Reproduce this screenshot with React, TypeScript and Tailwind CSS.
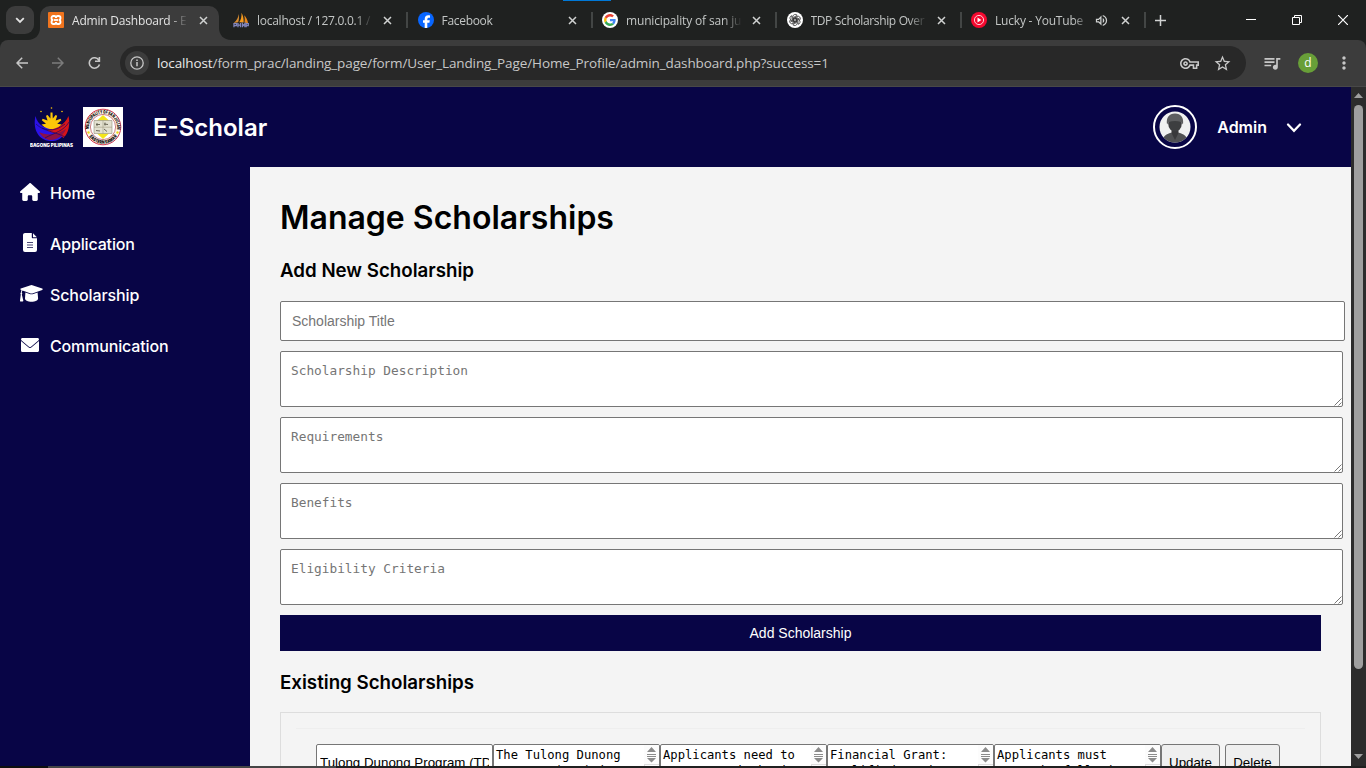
import type { ReactNode } from "react";
import { FaHouse } from "react-icons/fa6";
import { MdOutlineVpnKey, MdStarBorder, MdQueueMusic, MdMoreVert, MdOutlineVolumeUp } from "react-icons/md";

function XamppIcon() {
  return (
    <svg width="16" height="16" viewBox="0 0 16 16">
      <rect width="16" height="16" rx="1" fill="#f0741e" />
      <path d="M5.300 4h1c1.200 0 1.700 1 1.700 2 0-1 .5-2 1.700-2h1c1.100 0 1.800.8 1.800 1.900S11.800 8 10.700 8c1.100 0 1.800 1 1.800 2.100S11.800 12 10.700 12h-1C8.500 12 8 11 8 10c0 1-.5 2-1.700 2h-1c-1.100 0-1.800-.8-1.800-1.900S4.200 8 5.300 8C4.200 8 3.500 7 3.500 5.900S4.200 4 5.300 4z" fill="none" stroke="#fff" strokeWidth="1.800" />
      <path d="M6 8h4" stroke="#fff" strokeWidth="1.800" />
    </svg>
  );
}

function SailsIcon() {
  return (
    <svg width="17" height="16" viewBox="0 0 17 16">
      <path d="M6 1.500C5.800 5 4 8.500.8 11.200l4.700-.8C6.500 7.500 6.600 4 6 1.500z" fill="#d98d30" />
      <path d="M9 .2c.3 4-.4 7.300-2.400 10.300l4.700.2C11.500 7 10.900 3 9 .2z" fill="#f89c1c" />
      <path d="M11.800 3c.8 2.600.9 5 .3 7.600l3.900.8C15.500 8 14 5 11.800 3z" fill="#e8871b" />
      <path d="M1 15.800v-4h2.800v2.200H1M5.300 11.200v4.600M5.300 13.500h2.500M8 11.200v4.600M10 15.800v-4l1.300 2 1.300-2v4M14 15.800v-4h2.300v2.200H14" stroke="#8186bd" strokeWidth="1.300" fill="none" />
    </svg>
  );
}

function FacebookIcon() {
  return (
    <svg width="16" height="16" viewBox="0 0 16 16">
      <circle cx="8" cy="8" r="8" fill="#0866ff" />
      <path d="M6.700 16v-5.300H5V8.300h1.700V7.200c0-2.700 1.200-3.900 3.700-3.900.5 0 1.300.1 1.600.2v2.200h-.9c-1.300 0-1.800.5-1.800 1.700v.9h2.500l-.4 2.400H9.300V16z" fill="#fff" />
    </svg>
  );
}

function GoogleIcon() {
  return (
    <svg width="16" height="16" viewBox="0 0 48 48">
      <circle cx="24" cy="24" r="24" fill="#fff" />
      <g transform="translate(6.200 6.200) scale(.74)">
        <path fill="#EA4335" d="M24 9.500c3.540 0 6.710 1.220 9.210 3.600l6.850-6.850C35.900 2.380 30.470 0 24 0 14.620 0 6.510 5.380 2.560 13.220l7.980 6.190C12.430 13.720 17.740 9.500 24 9.500z" />
        <path fill="#4285F4" d="M46.980 24.550c0-1.570-.15-3.090-.38-4.550H24v9.020h12.940c-.58 2.960-2.260 5.480-4.780 7.180l7.730 6c4.510-4.180 7.090-10.360 7.090-17.650z" />
        <path fill="#FBBC05" d="M10.530 28.590A14.500 14.500 0 0 1 9.770 24c0-1.600.27-3.140.76-4.590l-7.980-6.190A23.990 23.990 0 0 0 0 24c0 3.880.92 7.540 2.560 10.780z" />
        <path fill="#34A853" d="M24 48c6.480 0 11.930-2.130 15.890-5.810l-7.730-6c-2.150 1.450-4.920 2.300-8.160 2.300-6.260 0-11.570-4.220-13.470-9.910l-7.980 6.190C6.510 42.620 14.620 48 24 48z" />
      </g>
    </svg>
  );
}

function KnotIcon() {
  return (
    <svg width="16" height="16" viewBox="0 0 16 16">
      <circle cx="8" cy="8" r="8" fill="#fff" />
      <g fill="none" stroke="#222" strokeWidth=".7">
        {[0, 60, 120, 180, 240, 300].map((a) => (
          <path key={a} transform={`rotate(${a} 8 8)`} d="M5.900 9.200V4.600a2.400 2.400 0 0 1 4.300-1.300L6.800 5.300v4.200" />
        ))}
      </g>
    </svg>
  );
}

function MusicIcon() {
  return (
    <svg width="16" height="16" viewBox="0 0 16 16">
      <circle cx="8" cy="8" r="8" fill="#f5092f" />
      <circle cx="8" cy="8" r="4.600" fill="none" stroke="#fff" strokeWidth=".8" />
      <path d="M6.500 5.600v4.800L10.400 8z" fill="#fff" />
    </svg>
  );
}

function Close() {
  return (
    <svg width="9" height="9" viewBox="0 0 9 9" className="shrink-0">
      <path d="M1 1l7 7M8 1L1 8" stroke="#d0d2d1" strokeWidth="1.500" />
    </svg>
  );
}

type TabProps = { icon: ReactNode; title: string; active?: boolean; sound?: boolean; separator?: boolean; tracking?: string };

function Tab({ icon, title, active, sound, separator, tracking }: TabProps) {
  return (
    <div className="relative flex h-full w-[184.500px] shrink-0 items-center">
      <div className={`relative flex h-full w-[179px] shrink-0 items-center pr-[11.500px] ${active ? "rounded-t-[10px] bg-[#3c3c3c] pl-2 text-[#e3e3e3]" : "pl-[8.500px] text-[#c3c6c5]"}`}>
        <span className="flex w-4 shrink-0 -translate-y-[3px]">{icon}</span>
        <div
          className={`ml-2 -translate-y-[2.500px] text-[12px] whitespace-nowrap ${tracking ?? ""} ${sound ? "w-[94px]" : "w-[116px]"} [mask-image:linear-gradient(to_right,black_84%,transparent)]`}
        >
          {title}
        </div>
        {sound && <MdOutlineVolumeUp className="ml-[5px] shrink-0 -translate-y-[3px] text-[#d0d2d1]" size={15} />}
        <span className="ml-auto -translate-y-[3px]">
          <Close />
        </span>
        {active && (
          <>
            <svg className="absolute bottom-0 -left-3" width="12" height="12" viewBox="0 0 12 12">
              <path d="M12 0v12H0C7 12 12 7 12 0z" fill="#3c3c3c" />
            </svg>
            <svg className="absolute -right-3 bottom-0" width="12" height="12" viewBox="0 0 12 12">
              <path d="M0 0v12h12C5 12 0 7 0 0z" fill="#3c3c3c" />
            </svg>
          </>
        )}
      </div>
      {separator && <div className="ml-[2.500px] h-4 w-0.5 -translate-y-[3px] bg-[#434645]" />}
    </div>
  );
}

function Browser() {
  return (
    <div className="h-[87px] shrink-0 bg-[#1f2120] font-['Open_Sans','Noto_Sans',sans-serif]">
      <div className="relative flex h-10 pt-1.5">
        <div className="absolute top-0 left-[563px] h-px w-12 bg-[#0078d7]" />
        <div className="mr-1.5 ml-1.5 flex size-7 shrink-0 items-center justify-center rounded-[9px] bg-[#3c3c3c]">
          <svg width="10" height="7" viewBox="0 0 10 7" fill="none">
            <path d="M1.200 1.200L5 5l3.800-3.800" stroke="#e3e3e3" strokeWidth="1.800" />
          </svg>
        </div>
        <Tab icon={<XamppIcon />} title="Admin Dashboard - E" active tracking="tracking-[-0.200px]" />
        <Tab icon={<SailsIcon />} title="localhost / 127.0.0.1 /" separator tracking="tracking-[-0.260px]" />
        <Tab icon={<FacebookIcon />} title="Facebook" separator tracking="tracking-[-0.300px]" />
        <Tab icon={<GoogleIcon />} title="municipality of san ju" separator tracking="tracking-[-0.160px]" />
        <Tab icon={<KnotIcon />} title="TDP Scholarship Over" separator tracking="tracking-[-0.350px]" />
        <Tab icon={<MusicIcon />} title="Lucky - YouTube |" sound separator tracking="tracking-[-0.200px]" />
        <svg className="mt-[8.500px] ml-2 shrink-0" width="11" height="11" viewBox="0 0 11 11">
          <path d="M5.500 0v11M0 5.500h11" stroke="#d0d2d1" strokeWidth="1.500" />
        </svg>
        <div className="mr-[18px] ml-auto flex h-7 items-center gap-[36px] text-white">
          <svg width="10" height="10" viewBox="0 0 10 10"><path d="M0 4.500h10" stroke="currentColor" /></svg>
          <svg width="10" height="10" viewBox="0 0 10 10" fill="none" stroke="currentColor"><path d="M.5 2.500h7v7h-7zM2.500 2.500v-2h7v7h-2" /></svg>
          <svg width="10" height="10" viewBox="0 0 10 10"><path d="M0 0l10 10M10 0L0 10" stroke="currentColor" strokeWidth="1.200" /></svg>
        </div>
      </div>
      <div className="flex h-[47px] items-center rounded-t-lg border-b border-[#484848] bg-[#3c3c3c]">
        <div className="flex h-full w-[120px] shrink-0 items-center pl-4">
          <svg width="12" height="12" viewBox="0 0 12 12" fill="none" stroke="#c7c7c7" strokeWidth="1.500"><path d="M12 6H1M6.200.7L1 6l5.200 5.300" /></svg>
          <svg className="ml-6" width="12" height="12" viewBox="0 0 12 12" fill="none" stroke="#7c7c7c" strokeWidth="1.500"><path d="M0 6h11M5.800.7L11 6l-5.200 5.300" /></svg>
          <svg className="ml-6" width="13" height="12" viewBox="0 0 13 12" fill="none" stroke="#c7c7c7" strokeWidth="1.600"><path d="M10.800 3A5.200 5.200 0 1 0 11.500 7.500M11.400 0v4.300H7" /></svg>
        </div>
        <div className="flex h-[34px] w-[1126px] shrink-0 items-center rounded-full bg-[#282828] pl-[5px]">
          <div className="flex size-6 items-center justify-center rounded-full bg-[#3c3c3c]">
            <svg width="14" height="14" viewBox="0 0 14 14" fill="none" stroke="#c7c7c7" strokeWidth="1.300"><circle cx="7" cy="7" r="6.200" /><path d="M7 6v4.200M7 3.600v1.400" strokeWidth="1.500" /></svg>
          </div>
          <span className="ml-2 text-[13.500px] tracking-[-0.110px] whitespace-nowrap text-[#c7c7c7]">
            <span className="text-[#e8e8e8]">localhost</span>/form_prac/landing_page/form/User_Landing_Page/Home_Profile/admin_dashboard.php?success=1
          </span>
          <div className="mr-[14.500px] ml-auto flex items-center gap-[13.500px] text-[#c7c7c7]">
            <MdOutlineVpnKey size={19} />
            <MdStarBorder size={19} />
          </div>
        </div>
        <MdQueueMusic size={20} className="ml-4 text-[#c7c7c7]" />
        <div className="ml-4 flex size-5 items-center justify-center rounded-full bg-[#689f38] text-[12px] leading-none text-white">d</div>
        <MdMoreVert size={20} className="ml-4 text-[#c7c7c7]" />
      </div>
    </div>
  );
}

function BagongLogo() {
  return (
    <svg width="44" height="42" viewBox="0 0 44 42">
      <g fill="#fbc608">
        <circle cx="21.500" cy="2" r=".8" /><circle cx="11" cy="5.500" r=".8" /><circle cx="32" cy="5.500" r=".8" />
        <path d="M20.500 6.500h2l.3 6 2.800-3.600 1.600.9-1.500 4.700 4.800-1.800.9 1.500-4.200 3.500 4.500.7-5 4.600H16.500L11.500 18.400l4.500-.7-4.200-3.500.9-1.500 4.800 1.800-1.500-4.700 1.600-.9 2.800 3.600z" />
      </g>
      <path d="M5.500 10C3 20 6 34.500 21 35c6 0 10-2 12-6-5-6-14-5-20-8.500-4-2.500-6.500-6-7.500-10.500z" fill="#2b12e8" />
      <path d="M38.500 10c2 9 0 17-5 22-5-5-12-4.500-17-8 11-1 18-5 22-14z" fill="#d81418" />
      <path d="M9 26c8 4 18 3 27-3-3 7-9 11.500-17 11-4-1-8-4-10-8z" fill="#8d1146" />
      <path d="M6 18c7 7 20 8 29 13M39 16c-5 9-15 11-24 16M12 22c7 3 14 3 23-4" stroke="#160765" strokeWidth=".7" fill="none" />
      <text x="0" y="40.500" fill="#fff" fontSize="4.200" fontWeight="900" fontFamily="Inter, sans-serif" textLength="43" lengthAdjust="spacingAndGlyphs">BAGONG PILIPINAS</text>
    </svg>
  );
}

function MunicipalSeal() {
  return (
    <svg width="40" height="40" viewBox="0 0 40 40">
      <defs>
        <path id="sealTop" d="M6.200 22a13.900 13.900 0 1 1 27.600 0" />
        <path id="sealBottom" d="M3.200 20a16.800 16.800 0 0 0 33.600 0" />
      </defs>
      <rect width="40" height="40" fill="#fff" />
      <circle cx="20" cy="20" r="17.800" fill="#fdf8ea" stroke="#cf3850" strokeWidth="1" />
      <circle cx="20" cy="20" r="12.600" fill="#fff" stroke="#b84a55" strokeWidth=".7" />
      <path d="M20 8l6 5.500H14zM20 32l6-5.500H14z" fill="#f3e51b" />
      <path d="M11 13.500h18v13H11z" fill="#e3e1d0" stroke="#807c68" strokeWidth=".5" />
      <path d="M13 17.500h4m-3-1.500v3m7-2l4 .5m-3-2v3M13 23.500l4 .5m4-2l3 2.500" stroke="#5f5b49" strokeWidth=".9" />
      <path d="M20 13.500v13M11 20.200h18" stroke="#a29d85" strokeWidth=".6" />
      <circle cx="5.500" cy="25.500" r="1.200" fill="#ead818" /><circle cx="34.500" cy="25.500" r="1.200" fill="#ead818" />
      <g fill="#17110f" fontSize="4.800" fontWeight="900" fontFamily="Inter, sans-serif">
        <text textLength="47" lengthAdjust="spacingAndGlyphs"><textPath href="#sealTop">MUNICIPALITY OF SAN JULIAN</textPath></text>
        <text><textPath href="#sealBottom" startOffset="19%" textLength="33" lengthAdjust="spacingAndGlyphs">EASTERN SAMAR</textPath></text>
      </g>
    </svg>
  );
}

function Avatar() {
  return (
    <svg width="44" height="44" viewBox="0 0 44 44">
      <defs><clipPath id="face"><circle cx="22" cy="22" r="15.500" /></clipPath></defs>
      <circle cx="22" cy="22" r="21" fill="none" stroke="#fff" strokeWidth="2" />
      <g clipPath="url(#face)">
        <rect width="44" height="44" fill="#f0f1f1" />
        <path d="M9 40c0-9 4-11 10-12.500h6c6 1.500 10 3.500 10 12.500z" fill="#505153" />
        <path d="M18.500 24h7v4L22 35l-3.500-7z" fill="#39393b" />
        <ellipse cx="22" cy="18.500" rx="6.800" ry="8" fill="#3d3e40" />
        <path d="M14 19.500c-1-7 2-11 8-11s9 4 8 11c-1-2.500-3.500-3.500-8-3.500s-7 1-8 3.500z" fill="#5d5e60" />
      </g>
    </svg>
  );
}

function Grip() {
  return (
    <svg className="absolute right-px bottom-px" width="8" height="8" viewBox="0 0 8 8">
      <path d="M.5 7.500l7-7M4.500 7.500l3-3" stroke="#555" strokeWidth=".8" />
    </svg>
  );
}

function Area({ placeholder }: { placeholder: string }) {
  return (
    <div className="relative h-14 w-[1063px]">
      <textarea
        placeholder={placeholder}
        className="block h-14 w-full resize-none overflow-hidden rounded-[2px] border border-[#767676] bg-white p-2.5 font-['DejaVu_Sans_Mono',monospace] text-[12.790px] leading-[17px] placeholder:text-[#757575]"
      />
      <Grip />
    </div>
  );
}

function Cell({ text }: { text: string }) {
  return (
    <div className="flex h-10 w-[167px] shrink-0 justify-between overflow-hidden rounded-t-[2px] border border-[#767676] bg-white">
      <p className="pt-0.5 pl-0.5 font-['DejaVu_Sans_Mono',monospace] text-[12.180px] leading-4 whitespace-pre text-black">{text}</p>
      <div className="w-[15px] shrink-0 bg-[#fcfcfc]">
        <svg width="15" height="30" viewBox="0 0 15 30">
          <path d="M7.500 2l4.500 5H3zM7.500 17.500l4.500-4.500H3z" fill="#8b8b8b" />
          <path d="M3 9.500h9M3 11.500h9" stroke="#8b8b8b" />
          <path d="M0 19.500h15M.5 19v11" stroke="#dcdcdc" />
        </svg>
      </div>
    </div>
  );
}

function FileIcon() {
  return (
    <svg className="ml-[3px]" width="14" height="19" viewBox="0 0 14 19">
      <path d="M2 0h6.800v4.200c0 .6.400 1 1 1H14V17a2 2 0 0 1-2 2H2a2 2 0 0 1-2-2V2C0 .9.9 0 2 0z" fill="#fff" />
      <path d="M10 .2L13.900 4.200H10z" fill="#fff" />
      <path d="M4 9.500h6M4 12h6M4 14.500h6" stroke="#4a4775" strokeWidth="1" />
    </svg>
  );
}

function CapIcon() {
  return (
    <svg width="23" height="17" viewBox="0 0 23 17" className="shrink-0" fill="#fff">
      <path d="M10.700.2a2.500 2.500 0 0 1 1.600 0l9.900 3.400c.7.300.7 1 0 1.300l-9.900 3.500a2.500 2.500 0 0 1-1.600 0L2.500 5.500c-.6.700-.7 1.300-.8 2 .7.500.7 1.400.1 1.900l1.500 6.200c.1.500-.2.900-.7.900H.7c-.5 0-.8-.4-.7-.9l.8-6.200c-.5-.5-.5-1.400.1-1.900 0-.9.200-1.700.6-2.500l-.7-.2c-.6-.2-.6-.9 0-1.200z" />
      <path d="M5.400 7.400l5 1.800c.7.200 1.500.2 2.200 0l5-1.800.5 6c0 1.900-3 3.300-6.600 3.300S5 15.300 5 13.400z" />
    </svg>
  );
}

function MailIcon() {
  return (
    <svg className="ml-[1px]" width="18" height="14" viewBox="0 0 18 14" fill="#fff">
      <path d="M1.500 0h15c.8 0 1.500.6 1.500 1.300 0 .4-.2.800-.6 1.100L10 8.700c-.6.500-1.400.5-2 0L.6 2.400C.2 2.100 0 1.700 0 1.300 0 .6.700 0 1.500 0z" />
      <path d="M0 3l7.400 6.300c1 .8 2.200.8 3.200 0L18 3v9.500c0 .8-.7 1.500-1.500 1.500h-15A1.500 1.500 0 0 1 0 12.500z" />
    </svg>
  );
}

const NAV = [
  { label: "Home", icon: <FaHouse size={20} className="shrink-0" />, spacing: "tracking-[-0.050px]" },
  { label: "Application", icon: <FileIcon />, spacing: "tracking-[-0.150px]" },
  { label: "Scholarship", icon: <CapIcon />, spacing: "tracking-[-0.100px]" },
  { label: "Communication", icon: <MailIcon />, spacing: "tracking-[-0.150px]" },
];

const CELLS = [
  "The Tulong Dunong\nProgram (TDP) is a",
  "Applicants need to\nmeet certain basic",
  "Financial Grant:\nQualified students",
  "Applicants must\nmeet the following",
];

export default function App() {
  return (
    <div className="flex h-[768px] w-[1366px] flex-col overflow-hidden bg-[#202020]">
      <Browser />
      <div className="flex h-[679px] shrink-0">
        <div className="flex w-[1351px] flex-col overflow-hidden bg-[#f4f4f4] font-[Inter,sans-serif]">
          <header className="flex h-20 shrink-0 items-center bg-[#080546] pr-[49px] pl-[30px] text-white">
            <BagongLogo />
            <div className="ml-[9px]"><MunicipalSeal /></div>
            <span className="ml-[30px] pt-0.5 text-2xl font-semibold">E-Scholar</span>
            <div className="ml-auto"><Avatar /></div>
            <span className="ml-5 text-base font-semibold">Admin</span>
            <svg className="mt-0.5 ml-[19px]" width="16" height="10" viewBox="0 0 16 10" fill="none">
              <path d="M2 1.500L8 7.800l6-6.300" stroke="#fff" strokeWidth="2.200" strokeLinecap="round" />
            </svg>
          </header>
          <div className="flex min-h-0 flex-1">
            <nav className="flex w-[250px] shrink-0 flex-col bg-[#080546] text-white">
              {NAV.map((n) => (
                <a key={n.label} className={`flex h-[51px] items-center pl-5 text-base font-medium ${n.spacing}`}>
                  <span className="flex w-[30px] shrink-0 -translate-y-px items-center">{n.icon}</span>
                  {n.label}
                </a>
              ))}
            </nav>
            <main className="w-[1101px] shrink-0 px-[30px] text-black">
              <h1 className="pt-[31px] text-[32px] leading-10 font-semibold">Manage Scholarships</h1>
              <h3 className="mt-[21px] text-[18.720px] leading-6 font-semibold">Add New Scholarship</h3>
              <form className="mt-[18px] flex flex-col gap-2.5">
                <input
                  placeholder="Scholarship Title"
                  className="h-10 w-[1065px] rounded-[2px] border border-[#767676] bg-white px-[11px] font-['Liberation_Sans',Arial,sans-serif] text-sm placeholder:text-[#757575]"
                />
                <Area placeholder="Scholarship Description" />
                <Area placeholder="Requirements" />
                <Area placeholder="Benefits" />
                <Area placeholder="Eligibility Criteria" />
                <button type="button" className="h-9 w-full bg-[#080546] font-['Liberation_Sans',Arial,sans-serif] text-sm text-white">
                  Add Scholarship
                </button>
              </form>
              <h3 className="mt-5 text-[18.720px] leading-6 font-semibold">Existing Scholarships</h3>
              <section className="mt-[17px] h-40 border border-[#dddddd] px-[15px] pt-[15px]">
                <div className="border-t border-[#eeeeee] px-5 pt-[15px]">
                  <div className="flex">
                    <div className="h-[37px] w-[177px] shrink-0 overflow-hidden rounded-[2px] border border-[#767676] bg-white px-[3px] font-['Liberation_Sans',Arial,sans-serif] text-[13.333px] leading-[35px] whitespace-nowrap">
                      <div className="w-[169px] overflow-hidden">Tulong Dunong Program (TDP)</div>
                    </div>
                    {CELLS.map((c) => <Cell key={c} text={c} />)}
                    <button type="button" className="h-[37px] w-[59px] rounded-[3px] border border-[#767676] bg-[#efefef] font-['Liberation_Sans',Arial,sans-serif] text-[13.333px]">Update</button>
                    <button type="button" className="ml-[5px] h-[37px] w-[55px] rounded-[3px] border border-[#767676] bg-[#efefef] font-['Liberation_Sans',Arial,sans-serif] text-[13.333px]">Delete</button>
                  </div>
                </div>
              </section>
            </main>
          </div>
        </div>
        <div className="flex w-[15px] flex-col items-center bg-[#2c2c2c]">
          <svg className="mt-1.5 shrink-0" width="9" height="5" viewBox="0 0 9 5"><path d="M4.500 0L9 5H0z" fill="#9f9f9f" /></svg>
          <div className="mt-[7px] h-[564px] w-[9px] rounded-full bg-[#9f9f9f]" />
          <svg className="mt-auto mb-[7px] shrink-0" width="9" height="5" viewBox="0 0 9 5"><path d="M4.500 5L9 0H0z" fill="#9f9f9f" /></svg>
        </div>
      </div>
      <div className="flex h-0.5">
        <div className="w-12 bg-[#0f0f0f]" />
        <div className="w-72 bg-[#454545]" />
      </div>
    </div>
  );
}
